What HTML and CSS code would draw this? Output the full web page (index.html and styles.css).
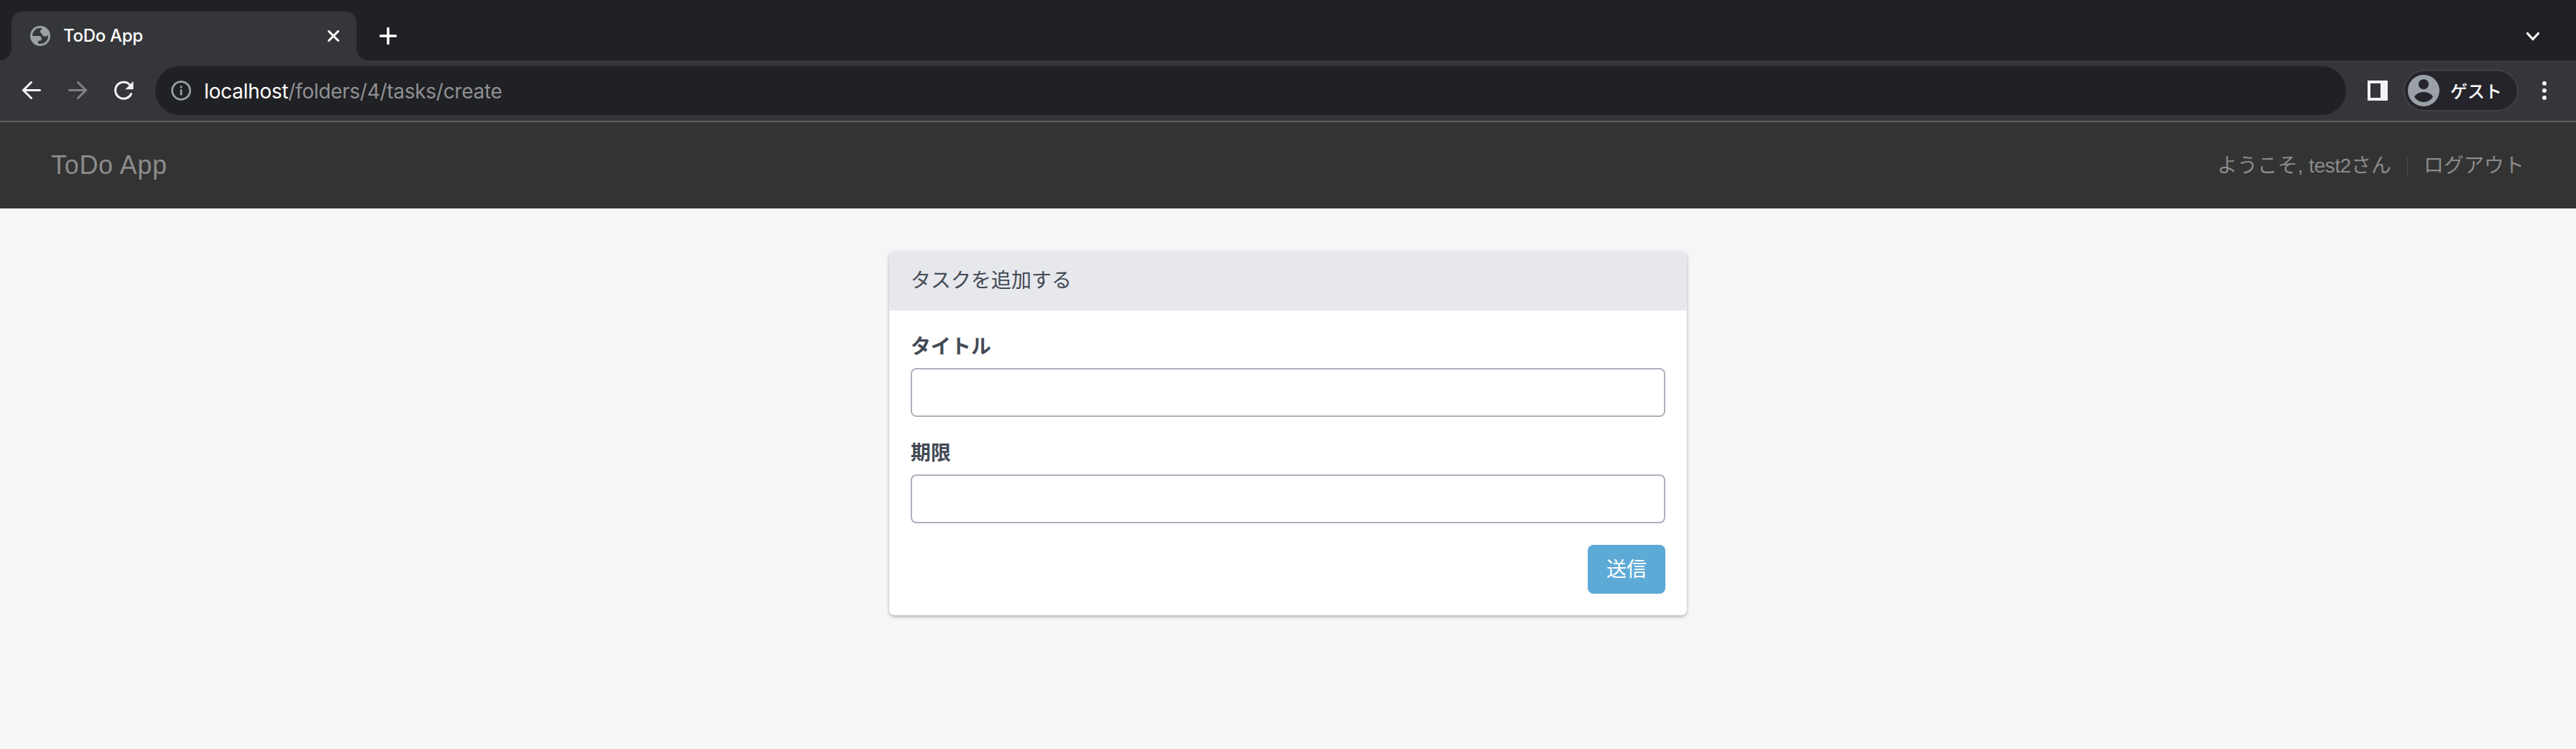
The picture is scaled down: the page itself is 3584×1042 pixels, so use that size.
FILE: index.html
```html
<!DOCTYPE html>
<html lang="ja">
<head>
<meta charset="utf-8">
<title>ToDo App</title>
<link rel="stylesheet" href="styles.css">
</head>
<body>
<header class="browser">
  <div class="tabs">
    <div class="tab">
      <svg class="globe" viewBox="0 0 28 28"><circle cx="14" cy="14" r="14" fill="#9aa0a6"/><path fill="#35363a" d="M3 14A11 11 0 0 1 16 3.200V5.500C13 6 13 9.500 15.800 10.200C16.500 13.500 19 15 22 14.800L25 13A11 11 0 0 1 11 24.600V20.800H14C15.500 20.500 16 19 15.800 17.500C15.500 15 14.500 14 12 14Z"/></svg>
      <span class="tab-title">ToDo App</span>
      <svg class="close" viewBox="0 0 16 16"><path d="M1.500 1.500l13 13M14.500 1.500l-13 13"/></svg>
    </div>
    <svg class="plus" viewBox="0 0 24 24"><path d="M12 1.500v21M1.500 12h21"/></svg>
    <svg class="chevron" viewBox="0 0 20 14"><path d="M2.500 2.500L10 10.500l7.500-8"/></svg>
  </div>
  <div class="toolbar">
    <svg class="nav-icon" viewBox="0 0 28 28"><path d="M25.500 13.500H3M13.500 2.500l-11 11 11 11"/></svg>
    <svg class="nav-icon dim" viewBox="0 0 28 28"><path d="M2.500 13.500H25M14.500 2.500l11 11-11 11"/></svg>
    <svg class="nav-icon" viewBox="0 0 28 28"><path d="M22.600 6A11.500 11.500 0 1 0 24.500 18.500"/><path class="tip" d="M27.500 1v11.200H16.300z"/></svg>
    <div class="address">
      <svg class="info" viewBox="0 0 28 28"><circle cx="14" cy="14" r="12.400"/><path d="M14 12.500V20.500M14 7.500v3"/></svg>
      <span class="url"><b>localhost</b>/folders/4/tasks/create</span>
    </div>
    <svg class="panel" viewBox="0 0 28 28"><path fill="#f1f3f4" fill-rule="evenodd" d="M0 0h28v28H0zM4 4v20h14V4z"/></svg>
    <div class="profile">
      <svg class="avatar" viewBox="0 0 44 44"><circle cx="22" cy="22" r="22" fill="#9aa0a6"/><circle cx="22" cy="13.300" r="7" fill="#24242a"/><path fill="#24242a" d="M9 30.500c2.500-4 7.500-6.500 13-6.500s10.500 2.500 13 6.500c-2.500 4.500-7.500 7.500-13 7.500s-10.500-3-13-7.500z"/></svg>
      <span>ゲスト</span>
    </div>
    <svg class="dots" viewBox="0 0 6 28"><circle cx="3" cy="4" r="3"/><circle cx="3" cy="14" r="3"/><circle cx="3" cy="24" r="3"/></svg>
  </div>
</header>
<nav class="navbar">
  <a class="brand">ToDo App</a>
  <div class="account"><span>ようこそ, <span class="user">test2</span>さん</span><i class="divider"></i><a>ログアウト</a></div>
</nav>
<main>
  <section class="card">
    <h1>タスクを追加する</h1>
    <form>
      <label for="title">タイトル</label>
      <input id="title" type="text">
      <label for="due">期限</label>
      <input id="due" type="text">
      <button type="button">送信</button>
    </form>
  </section>
</main>
</body>
</html>
```
FILE: styles.css
```css
* { box-sizing: border-box; }
body {
  margin: 0;
  min-height: 1042px;
  background: #f5f6f8;
  font: 28px/40px "Liberation Sans", "Noto Sans CJK JP", sans-serif;
  color: #434a54;
}
svg { display: block; flex: none; fill: none; stroke-linecap: round; }
.browser { height: 170px; background: #35363a; border-bottom: 2px solid #5f6368; }
.tabs { display: flex; align-items: flex-start; height: 84px; padding: 16px 50px 0 0; background: #202124; }
.tab {
  position: relative;
  display: flex;
  align-items: center;
  width: 480px;
  height: 68px;
  margin-left: 16px;
  padding: 0 24px 0 26px;
  border-radius: 16px 16px 0 0;
  background: #35363a;
}
.tab::before, .tab::after { content: ""; position: absolute; bottom: 0; width: 16px; height: 16px; }
.tab::before { left: -16px; background: radial-gradient(circle at 0 0, transparent 15.5px, #35363a 16.5px); }
.tab::after { right: -16px; background: radial-gradient(circle at 100% 0, transparent 15.5px, #35363a 16.5px); }
.globe { width: 28px; height: 28px; }
.tab-title { flex: 1; margin-left: 18px; color: #fff; font: 500 24px/32px Inter, sans-serif; letter-spacing: -.3px; }
.close { width: 16px; height: 16px; stroke: #fff; stroke-width: 3; }
.plus { width: 24px; height: 24px; margin: 22px 0 0 32px; stroke: #fff; stroke-width: 3.500; }
.chevron { width: 20px; height: 14px; margin: 28px 0 0 auto; stroke: #fff; stroke-width: 3.200; }
.toolbar { display: flex; align-items: center; height: 84px; padding: 0 41px 0 30px; }
.nav-icon { width: 28px; height: 28px; margin-right: 36px; stroke: #f1f3f4; stroke-width: 3; }
.nav-icon.dim { stroke: #818285; }
.nav-icon:nth-of-type(3) { margin-right: 30px; }
.nav-icon .tip { fill: #f1f3f4; stroke: none; }
.address { display: flex; align-items: center; width: 3048px; height: 68px; padding-left: 22px; border-radius: 34px; background: #202124; }
.info { width: 28px; height: 28px; stroke: #9aa0a6; stroke-width: 2.800; stroke-linecap: butt; }
.url { margin-left: 18px; padding-top: 1px; color: #8f9093; font: 28px/36px Inter, sans-serif; letter-spacing: -.28px; }
.url b { color: #fff; font-weight: 400; }
.panel { width: 28px; height: 28px; margin-left: 30px; }
.profile {
  display: flex;
  align-items: center;
  width: 160px;
  height: 58px;
  margin-left: 22px;
  padding-left: 4px;
  border: 2px solid #404045;
  border-radius: 29px;
  background: #24242a;
  color: #fff;
  font: 500 24px/32px "Noto Sans CJK JP", sans-serif;
}
.profile span { margin-left: 15px; }
.avatar { width: 44px; height: 44px; }
.dots { width: 6px; height: 28px; margin-left: auto; fill: #f1f3f4; }
.navbar { display: flex; align-items: center; justify-content: space-between; height: 120px; padding: 0 72px 0 71px; background: #333; color: #8b8b8b; }
.brand { font-size: 36px; letter-spacing: .7px; }
.account { display: flex; align-items: center; padding-top: 1px; }
.user { letter-spacing: -.4px; }
.divider { width: 1px; height: 26px; margin: 0 22px; background: #434a54; }
main { display: flex; justify-content: center; padding-top: 60px; }
.card { width: 1110px; height: 506px; border-radius: 8px; background: #fff; box-shadow: 0 2px 4px rgba(0, 0, 0, .3); }
h1 { height: 82px; margin: 0; padding: 21px 30px; border-radius: 8px 8px 0 0; background: #e6e8ec; font-size: 28px; font-weight: 400; }
form { display: flex; flex-direction: column; padding: 30px; }
label { padding-top: 1px; margin-bottom: 9px; font-weight: 700; }
input { height: 68px; margin-bottom: 30px; padding: 12px 24px; border: 2px solid #aab2bd; border-radius: 8px; font: inherit; }
button { align-self: flex-end; width: 108px; height: 68px; padding: 1px 0 0; border: 0; border-radius: 8px; background: #5eaad6; color: #fff; font: inherit; }
```
